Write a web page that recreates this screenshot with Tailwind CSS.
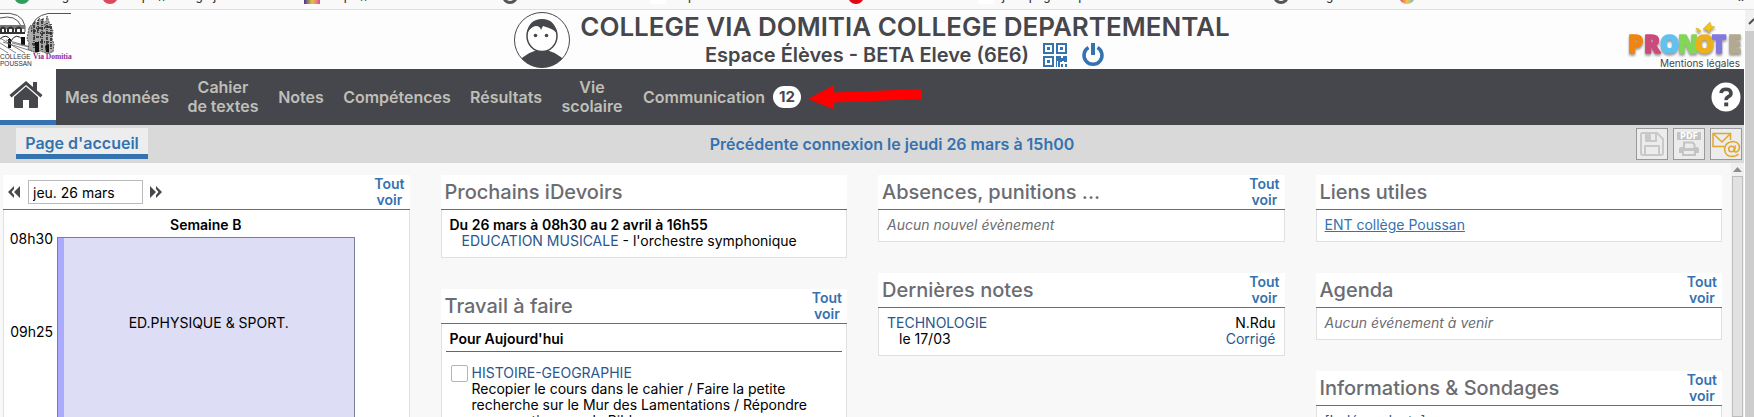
<!DOCTYPE html>
<html lang="fr">
<head>
    <meta charset="UTF-8">
    <meta name="viewport" content="width=device-width, initial-scale=1.0">
    <title>PRONOTE - Espace Élèves</title>
    <script src="https://cdn.jsdelivr.net/npm/@tailwindcss/browser@4"></script>
    <style>
        body {
            font-family: 'Inter', 'Open Sans', sans-serif;
        }
    </style>
</head>
<body class="h-screen flex flex-col overflow-hidden bg-[#f8f8f8] text-sm leading-4 text-black">

    <!-- Bookmarks bar, scrolled almost out of view -->
    <div class="h-[10px] shrink-0 overflow-hidden flex items-end bg-[#f9f9f9] border-b border-[#dedede] font-[Roboto] text-[13px] text-[#333]">
        <div class="flex items-end w-full pb-[5px] pl-[14px] whitespace-nowrap">
            <div class="flex items-end w-[88px] gap-2"><i class="size-4 rounded-full bg-[#2f9e5b]"></i><span>Google</span></div>
            <div class="flex items-end w-[202px] gap-2"><i class="size-4 rounded-full bg-[#dc4b5b]"></i><span>https://college.jimdo</span></div>
            <div class="flex items-end w-[198px] gap-2"><i class="size-4 bg-linear-to-r from-[#4b2e83] via-[#e8c31d] to-[#e0409a]"></i><span>https://www</span></div>
            <div class="flex items-end w-[148px] gap-2"><i class="size-4 rounded-full border-3 border-[#555]"></i><span>Accueil</span></div>
            <div class="flex items-end w-[198px] gap-2"><i class="size-4 bg-white"></i><span>Espace</span></div>
            <div class="flex items-end w-[130px] gap-2"><i class="size-4 rounded-full bg-[#e30613]"></i><span>Accueil</span></div>
            <div class="flex items-end w-[295px] gap-2"><i class="size-4 bg-white"></i><span>j - espagnol - prof</span></div>
            <div class="flex items-end w-[126px] gap-2"><i class="size-4 rounded-full border-3 border-[#555]"></i><span>Collège</span></div>
            <i class="size-4 rounded-full bg-linear-to-r from-[#e0206a] via-[#f5c542] to-[#3fb5c9]"></i>
            <span class="ml-auto mr-2 text-lg leading-4">»</span>
        </div>
    </div>

    <div class="flex flex-1 min-h-0">
        <div class="flex flex-col flex-1 min-w-0">

            <header class="h-[59px] shrink-0 flex items-center justify-between bg-[#fdfdfd]">
                <div class="w-32">
                    <svg class="block" width="76" height="57" viewBox="0 0 76 57" fill="none" stroke="#333" stroke-width="1">
                        <path d="M0 2.500Q22 0 25 15v6M0 7Q16 3 21 15M31 19Q33 5 48 2.500H71" stroke="#555"/>
                        <path d="M0 14H25V18H0Z" fill="#777" stroke="none"/>
                        <path d="M1 22v-4q2-3 4 0v4M8 22v-4q3-3 5 0v4M16 22v-4q3-3 5 0v4M0 22H25" stroke-width="2"/>
                        <path d="M0 28Q6 22 11 29M11 30Q16 21 23 29" stroke="#222"/>
                        <path d="M8 28h3v9H8ZM21 26h4v8h-4Z" fill="#111" stroke="none"/>
                        <path d="M0 32L16 42M0 27L25 42M3 31L38 42M6 29L42 39M12 32L46 40M0 37L8 42" stroke="#666" stroke-width=".8"/>
                        <path d="M29 17l2-3 1 6 3-10 2 3 2-6 3 4 1-4 2 8 2-10 3 9 3 6-1 8 2 5-1 8-7 1-6-2-6 1-6-3 1-6-2-4Z" fill="#aaa" stroke="#555" stroke-dasharray="2 1"/>
                        <path d="M34 12v26M38 9v13M42 8v31M47 12v24M51 13v25M31 20h8M36 17h9M34 26h8M40 22h11M38 31h12M45 16h6M32 33h7" stroke="#222" stroke-dasharray="1 1 3 1" stroke-width="1.500"/>
                        <path d="M35 31h4v10h-4ZM45 35l4-2v8h-3Z" fill="#111" stroke="none"/>
                        <g stroke="none" font-family="Liberation Sans" font-size="6.500">
                            <text x="0" y="48" fill="#333">COLLEGE</text>
                            <text x="0" y="55" fill="#333">POUSSAN</text>
                            <text x="33" y="48" fill="#8b2a9b" font-family="Liberation Serif" font-weight="bold" font-size="7.500">Via Domitia</text>
                        </g>
                    </svg>
                </div>

                <div class="flex items-center gap-[10px] text-[#46474c]">
                    <svg width="56" height="58" viewBox="0 0 56 58">
                        <defs><clipPath id="avatar"><circle cx="28" cy="29" r="27.500"/></clipPath></defs>
                        <circle cx="28" cy="29" r="27.500" fill="#fff" stroke="#46474c"/>
                        <g clip-path="url(#avatar)">
                            <path d="M3 52Q14 39 28 39T53 52V58H3Z" fill="#46474c"/>
                        </g>
                        <ellipse cx="28" cy="25" rx="15" ry="15.500" fill="#fff" stroke="#46474c" stroke-width="1.500"/>
                        <path d="M13 22Q15 8 28 8T43 23Q41 19 35 17L29 15L27 19Q26 15 22 15T13 22Z" fill="#46474c"/>
                        <circle cx="21.500" cy="24.500" r="1.800" fill="#46474c"/>
                        <circle cx="32.500" cy="24.500" r="1.800" fill="#46474c"/>
                    </svg>
                    <div class="flex flex-col items-center">
                        <h1 class="text-[26px] leading-[30px] font-semibold whitespace-nowrap">COLLEGE VIA DOMITIA COLLEGE DEPARTEMENTAL</h1>
                        <div class="flex items-center gap-[14px]">
                            <h2 class="text-[20px] leading-[26px] font-semibold whitespace-nowrap">Espace Élèves - BETA Eleve (6E6)</h2>
                            <button type="button" aria-label="QR code" class="text-[#3572b0]">
                                <svg class="block" width="24" height="24" viewBox="0 0 24 24" fill="currentColor">
                                    <path fill-rule="evenodd" d="M0 0h11v11H0ZM2 2v7h7V2ZM4 4h3v3H4ZM13 0h11v11H13ZM15 2v7h7V2ZM17 4h3v3h-3ZM0 13h11v11H0ZM2 15v7h7v-7ZM4 17h3v3H4Z"/>
                                    <path d="M13 13h5v2h2v-2h4v6h-3v-1h-2v1h-2v5h-2v-6h-1v6h-1ZM18 21h2v3h-2ZM22 21h2v3h-2Z"/>
                                </svg>
                            </button>
                            <button type="button" aria-label="Se déconnecter" class="text-[#3572b0]">
                                <svg class="block" width="24" height="24" viewBox="0 0 24 24" fill="none" stroke="currentColor" stroke-width="3.500">
                                    <path d="M7.500 4.500A9 9 0 1 0 16.500 4.500"/>
                                    <path d="M12 0V12" stroke-width="4"/>
                                </svg>
                            </button>
                        </div>
                    </div>
                </div>

                <div class="w-32 flex flex-col items-end self-end pr-1">
                    <svg class="block -mr-1 drop-shadow-[0_2px_1px_#999999]" width="118" height="36" viewBox="0 0 118 36" font-family="Open Sans" font-weight="800" font-size="24" stroke-width="1.500" stroke-linejoin="round">
                        <text x="2" y="32" fill="#f08512" stroke="#f08512">P</text>
                        <text x="18" y="32" fill="#cb4a7c" stroke="#cb4a7c">R</text>
                        <text x="34" y="32" fill="#62c1ee" stroke="#62c1ee">O</text>
                        <text x="52" y="32" fill="#83d65a" stroke="#83d65a">N</text>
                        <text x="69" y="32" fill="#ecb01c" stroke="#ecb01c">O</text>
                        <text x="86" y="32" fill="#8378de" stroke="#8378de">T</text>
                        <text x="102" y="32" fill="#b3a98e" stroke="#b3a98e">E</text>
                        <path d="M80 5l4-4 1 4 4 1-4 2-2 4-2-3-4-1ZM70 7l3 1 2 2-3 1Z" fill="#f2c21d" stroke="#d9a514" stroke-width=".5"/>
                    </svg>
                    <a href="#" class="text-[10px] leading-[12px] text-[#46474c] whitespace-nowrap">Mentions légales</a>
                </div>
            </header>

            <nav class="h-14 shrink-0 flex items-stretch bg-[#46474c] text-[#bfbfb8] text-[16px] leading-[19px] font-semibold text-center">
                <a href="#" aria-label="Accueil" class="w-14 pr-1 flex items-center justify-center bg-white border-b-5 border-[#3572b0] text-[#46474c]">
                    <svg width="34" height="27" viewBox="0 0 34 27" fill="currentColor">
                        <path d="M17 5.500L29 16V26q0 1-1 1H20V19H14V27H6q-1 0-1-1V16Z"/>
                        <path d="M17 0L24 6V1H28V9.500L33.500 14L31.500 16.500L17 4L2.500 16.500L.5 14Z"/>
                    </svg>
                </a>
                <a href="#" class="w-[122px] flex items-center justify-center">Mes données</a>
                <a href="#" class="w-[90px] flex items-center justify-center">Cahier<br>de textes</a>
                <a href="#" class="w-[66px] flex items-center justify-center">Notes</a>
                <a href="#" class="w-[126px] flex items-center justify-center">Compétences</a>
                <a href="#" class="w-[92px] flex items-center justify-center">Résultats</a>
                <a href="#" class="w-[80px] flex items-center justify-center">Vie<br>scolaire</a>
                <a href="#" class="relative w-[180px] px-[11px] flex items-center justify-between">
                    Communication
                    <span class="w-7 h-[22px] rounded-full bg-white text-[#46474c] text-[15px] font-bold leading-[22px]">12</span>
                    <svg class="absolute left-full top-4 -ml-1" width="116" height="26" viewBox="0 0 116 26" fill="#fe0000">
                        <path d="M0 14L26 0V7.500L114 4V14L26 17.500V24.500Z"/>
                    </svg>
                </a>
                <button type="button" aria-label="Aide" class="ml-auto mr-[3px] self-center">
                    <svg class="block" width="30" height="30" viewBox="0 0 30 30">
                        <circle cx="15" cy="15" r="14.500" fill="#fff"/>
                        <path d="M10 11Q10.500 7.200 15 7.200T20 11Q20 13.500 17.500 14.700T15.200 18.200" fill="none" stroke="#46474c" stroke-width="3.600"/>
                        <path d="M13.200 20.500h4v3.800h-4Z" fill="#46474c"/>
                    </svg>
                </button>
            </nav>

            <div class="h-[38px] shrink-0 flex items-start justify-between pt-[3px] pl-4 pr-[2px] bg-[#d9d9d9] text-[#3572b0] text-[16px] font-semibold">
                <a href="#" class="w-[132px] h-[31px] pt-1 flex items-center justify-center bg-[#ededed] border-b-5 border-[#3572b0]">Page d'accueil</a>
                <p class="leading-8">Précédente connexion le jeudi 26 mars à 15h00</p>
                <div class="flex gap-[5px]">
                    <button type="button" aria-label="Enregistrer" class="size-8 flex items-center justify-center bg-[#ececec] border border-[#999] text-[#c9c9c9]">
                        <svg width="26" height="26" viewBox="0 0 26 26" fill="none" stroke="currentColor" stroke-width="2">
                            <path d="M3 2H18L24 8V22q0 2-2 2H4q-2 0-2-2V3Z"/>
                            <path d="M7 2V10H17V2M6 24V15H20V24"/>
                            <path d="M8 3h4v6H8Z" fill="currentColor" stroke="none"/>
                        </svg>
                    </button>
                    <button type="button" aria-label="Imprimer en PDF" class="size-8 flex items-center justify-center bg-[#ececec] border border-[#999] text-[#c4c4c4]">
                        <svg width="26" height="26" viewBox="0 0 26 26" fill="currentColor">
                            <path d="M1 1H25V9H1Z"/>
                            <text x="13" y="8" fill="#fff" font-family="DejaVu Sans" font-weight="bold" font-size="8" text-anchor="middle">PDF</text>
                            <path fill-rule="evenodd" d="M7 10.500H17L19.500 13V16H21q2 0 2 2V22H20V25H6V22H3V18q0-2 2-2H7ZM9 12.500V17H17.500V14L16 12.500ZM8 20V23H18V20Z"/>
                        </svg>
                    </button>
                    <button type="button" aria-label="Messagerie" class="size-8 flex items-center justify-center bg-[#ececec] border border-[#999] text-[#e2a52d]">
                        <svg width="30" height="28" viewBox="0 0 30 28" fill="none" stroke="currentColor" stroke-width="1.500">
                            <path d="M13 16.500H2V3.500H19.500V10"/>
                            <path d="M2 3.500L11 12L19.500 3.500"/>
                            <circle cx="20.500" cy="19" r="2.800"/>
                            <path d="M24.500 15.500L23.500 20.500Q23.500 22.500 25.500 22Q28.500 20.500 28.500 17.500Q28 11.500 21.500 11.500Q14 12.500 13.500 19Q14 26 20.500 26.500Q25 26.500 27.500 24"/>
                        </svg>
                    </button>
                </div>
            </div>

            <div class="flex flex-1 min-h-0">
                <main class="flex-1 grid grid-cols-4 items-start gap-[31px] pt-3 pl-[3px] pr-[9px] overflow-hidden">

                    <section>
                        <div class="h-[35px] flex items-center justify-between pl-1 pr-[5px] bg-white border-b border-[#6b6c72]">
                            <div class="flex items-center gap-[7px] text-[#46474c]">
                                <button type="button" aria-label="Jour précédent">
                                    <svg class="block" width="14" height="12" viewBox="0 0 14 12" fill="currentColor"><path d="M7 0V3L4.500 6L7 9V12L1 6ZM13 0V12L7 6Z"/></svg>
                                </button>
                                <input type="text" value="jeu. 26 mars" aria-label="Date" class="w-[115px] h-6 px-1 bg-white border border-[#bbb] text-black">
                                <button type="button" aria-label="Jour suivant">
                                    <svg class="block" width="14" height="12" viewBox="0 0 14 12" fill="currentColor"><path d="M6 0V3L8.500 6L6 9V12L12 6ZM0 0V12L6 6Z"/></svg>
                                </button>
                            </div>
                            <a href="#" class="text-center font-semibold text-[#3572b0]">Tout<br>voir</a>
                        </div>
                        <div class="flex gap-1 pr-[54px] bg-white border-x border-[#e0e0e0]">
                            <div class="w-[49px] shrink-0 pt-[21px] text-right">
                                <div class="h-[93px]">08h30</div>
                                <div class="h-[93px]">09h25</div>
                            </div>
                            <div class="flex-1 pt-[7px]">
                                <p class="text-center font-semibold">Semaine B</p>
                                <div class="mt-1 h-[190px] flex bg-[#ddddf5] border border-[#7c7c9c]">
                                    <div class="w-[6px] bg-[#aaaaff]"></div>
                                    <p class="flex-1 pt-[77px] text-center">ED.PHYSIQUE &amp; SPORT.</p>
                                </div>
                            </div>
                        </div>
                    </section>

                    <div class="flex flex-col gap-[31px]">
                        <section>
                            <div class="h-[35px] flex items-center justify-between px-1 bg-white border-b border-[#6b6c72]">
                                <h3 class="text-[20px] font-medium text-[#6b6c72]">Prochains iDevoirs</h3>
                            </div>
                            <div class="pt-[7px] pb-2 px-2 bg-white border border-t-0 border-[#e0e0e0]">
                                <p class="font-semibold">Du 26 mars à 08h30 au 2 avril à 16h55</p>
                                <p class="pl-3"><span class="text-[#2a568c]">EDUCATION MUSICALE</span> - l'orchestre symphonique</p>
                            </div>
                        </section>
                        <section>
                            <div class="h-[35px] flex items-center justify-between pl-1 pr-[5px] bg-white border-b border-[#6b6c72]">
                                <h3 class="text-[20px] font-medium text-[#6b6c72]">Travail à faire</h3>
                                <a href="#" class="text-center font-semibold text-[#3572b0]">Tout<br>voir</a>
                            </div>
                            <div class="pt-[7px] pb-2 px-1 bg-white border border-t-0 border-[#e0e0e0]">
                                <h4 class="px-1 pb-1 font-semibold border-b border-[#3572b0]">Pour Aujourd'hui</h4>
                                <div class="flex items-start gap-1 pt-[13px] pl-[5px] pr-2">
                                    <input type="checkbox" id="devoir-histoire" class="appearance-none size-[17px] shrink-0 rounded-xs bg-white border border-[#b5b5b5]">
                                    <label for="devoir-histoire">
                                        <span class="text-[#2a568c]">HISTOIRE-GEOGRAPHIE</span><br>
                                        Recopier le cours dans le cahier / Faire la petite<br>
                                        recherche sur le Mur des Lamentations / Répondre<br>
                                        aux questions sur la Bible
                                    </label>
                                </div>
                            </div>
                        </section>
                    </div>

                    <div class="flex flex-col gap-[31px]">
                        <section>
                            <div class="h-[35px] flex items-center justify-between pl-1 pr-[5px] bg-white border-b border-[#6b6c72]">
                                <h3 class="text-[20px] font-medium text-[#6b6c72]">Absences, punitions ...</h3>
                                <a href="#" class="text-center font-semibold text-[#3572b0]">Tout<br>voir</a>
                            </div>
                            <div class="pt-[7px] pb-2 px-2 bg-white border border-t-0 border-[#e0e0e0]">
                                <p class="italic text-[#6b6c72]">Aucun nouvel évènement</p>
                            </div>
                        </section>
                        <section>
                            <div class="h-[35px] flex items-center justify-between pl-1 pr-[5px] bg-white border-b border-[#6b6c72]">
                                <h3 class="text-[20px] font-medium text-[#6b6c72]">Dernières notes</h3>
                                <a href="#" class="text-center font-semibold text-[#3572b0]">Tout<br>voir</a>
                            </div>
                            <div class="flex justify-between pt-[7px] pb-2 px-2 bg-white border border-t-0 border-[#e0e0e0]">
                                <div>
                                    <p class="text-[#2a568c]">TECHNOLOGIE</p>
                                    <p class="pl-3">le 17/03</p>
                                </div>
                                <div class="text-right">
                                    <p>N.Rdu</p>
                                    <a href="#" class="block text-[#2a568c]">Corrigé</a>
                                </div>
                            </div>
                        </section>
                    </div>

                    <div class="flex flex-col gap-[31px]">
                        <section>
                            <div class="h-[35px] flex items-center justify-between px-1 bg-white border-b border-[#6b6c72]">
                                <h3 class="text-[20px] font-medium text-[#6b6c72]">Liens utiles</h3>
                            </div>
                            <div class="pt-[7px] pb-2 px-2 bg-white border border-t-0 border-[#e0e0e0]">
                                <a href="#" class="block underline text-[#3572b0]">ENT collège Poussan</a>
                            </div>
                        </section>
                        <section>
                            <div class="h-[35px] flex items-center justify-between pl-1 pr-[5px] bg-white border-b border-[#6b6c72]">
                                <h3 class="text-[20px] font-medium text-[#6b6c72]">Agenda</h3>
                                <a href="#" class="text-center font-semibold text-[#3572b0]">Tout<br>voir</a>
                            </div>
                            <div class="pt-[7px] pb-2 px-2 bg-white border border-t-0 border-[#e0e0e0]">
                                <p class="italic text-[#6b6c72]">Aucun événement à venir</p>
                            </div>
                        </section>
                        <section>
                            <div class="h-[35px] flex items-center justify-between pl-1 pr-[5px] bg-white border-b border-[#6b6c72]">
                                <h3 class="text-[20px] font-medium text-[#6b6c72]">Informations &amp; Sondages</h3>
                                <a href="#" class="text-center font-semibold text-[#3572b0]">Tout<br>voir</a>
                            </div>
                            <div class="pt-[7px] pb-2 px-2 bg-white border border-t-0 border-[#e0e0e0]">
                                <p class="text-[#2a568c]">[Indépendante]</p>
                            </div>
                        </section>
                    </div>
                </main>

                <!-- Inner scrollbar -->
                <div class="w-[13px] flex flex-col items-center bg-[#f0f0f0]">
                    <svg class="my-1 shrink-0" width="9" height="5" viewBox="0 0 9 5" fill="#8c8c8c"><path d="M0 5L4.500 0L9 5Z"/></svg>
                    <div class="flex-1 w-[11px] bg-[#e1e1e1] border border-[#bdbdbd]"></div>
                </div>
            </div>
        </div>

        <!-- Window scrollbar -->
        <div class="w-[10px] shrink-0 flex flex-col pl-px bg-white">
            <div class="h-[21px] shrink-0 flex items-center justify-end overflow-hidden bg-[#f1f1f1]">
                <svg class="shrink-0" width="6" height="8" viewBox="0 0 6 8" fill="none" stroke="#505050" stroke-width="2"><path d="M1 7L6 2"/></svg>
            </div>
            <div class="flex-1 bg-[#cdcdcd]"></div>
        </div>
    </div>
</body>
</html>
